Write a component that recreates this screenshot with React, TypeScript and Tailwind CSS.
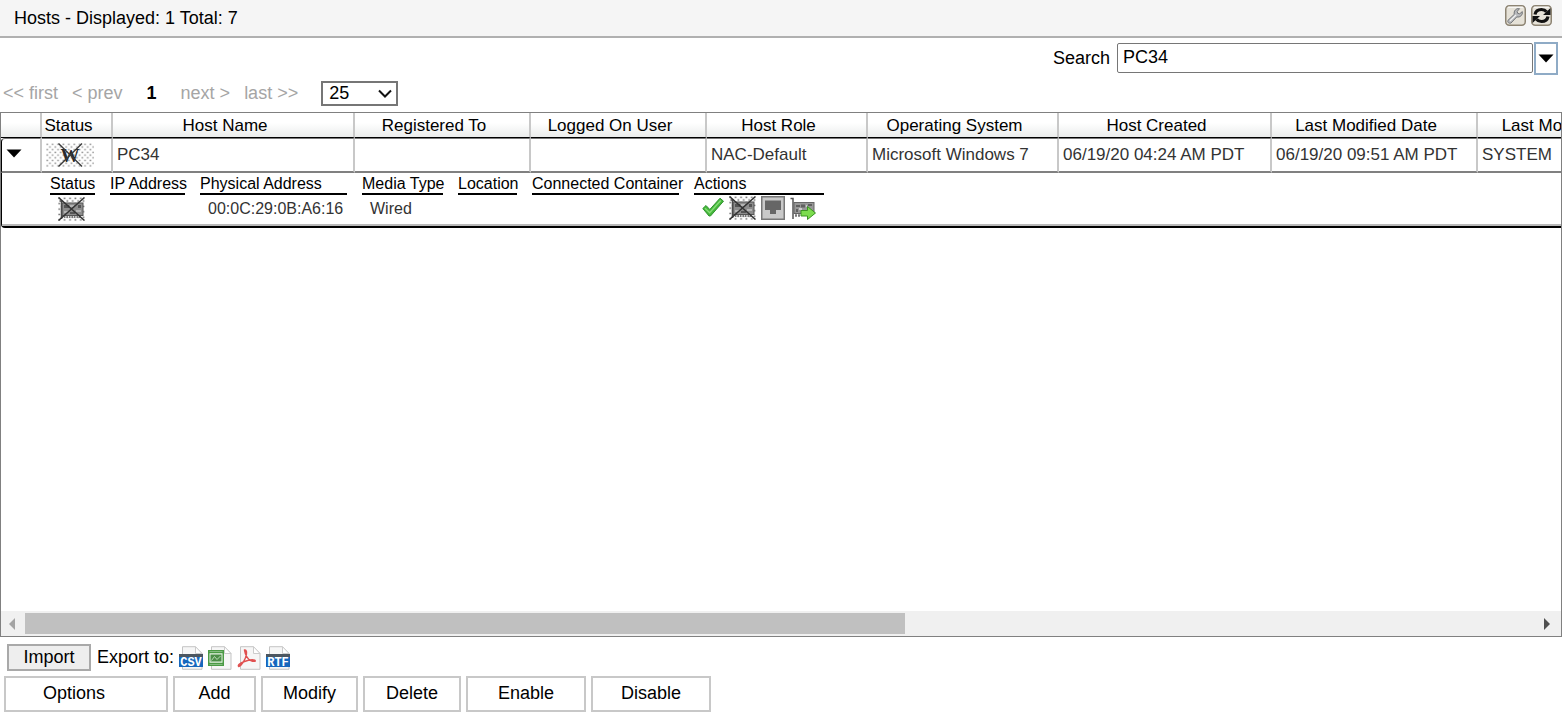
const columns = [
  { label: "", width: "w-[41px]" },
  { label: "Status", width: "w-[71px]" },
  { label: "Host Name", width: "w-[242px]" },
  { label: "Registered To", width: "w-[176px]" },
  { label: "Logged On User", width: "w-[176px]" },
  { label: "Host Role", width: "w-[161px]" },
  { label: "Operating System", width: "w-[191px]" },
  { label: "Host Created", width: "w-[213px]" },
  { label: "Last Modified Date", width: "w-[206px]" },
  { label: "Last Modified By", width: "w-[191px]" },
];

const host = [
  "PC34",
  "",
  "",
  "NAC-Default",
  "Microsoft Windows 7",
  "06/19/20 04:24 AM PDT",
  "06/19/20 09:51 AM PDT",
  "SYSTEM",
];

const adapterColumns = [
  { label: "Status", width: "w-[45px]" },
  { label: "IP Address", width: "w-[75px]" },
  { label: "Physical Address", width: "w-[147px]" },
  { label: "Media Type", width: "w-[81px]" },
  { label: "Location", width: "w-[59px]" },
  { label: "Connected Container", width: "w-[147px]" },
  { label: "Actions", width: "w-[130px]" },
];

const hostActions = [
  { label: "Options", style: "w-[164px] pr-6" },
  { label: "Add", style: "w-[83px]" },
  { label: "Modify", style: "w-[97px]" },
  { label: "Delete", style: "w-[98px]" },
  { label: "Enable", style: "w-[120px]" },
  { label: "Disable", style: "w-[120px]" },
];

const DotPattern = ({ id, color }: { id: string; color: string }) => (
  <defs>
    <pattern id={id} width="5.4" height="5.4" patternUnits="userSpaceOnUse">
      <rect x="0.4" y="0.6" width="1.7" height="1.4" fill={color} />
      <rect x="3.1" y="3.3" width="1.7" height="1.4" fill={color} />
    </pattern>
  </defs>
);

const HostStatusIcon = () => (
  <svg width="48" height="24" viewBox="0 0 48 24" className="block">
    <DotPattern id="host-dots" color="#959595" />
    <rect width="48" height="24" fill="url(#host-dots)" />
    <text
      x="24"
      y="18.5"
      textAnchor="middle"
      fill="#2a2a2a"
      fontSize="19"
      fontWeight="bold"
      fontFamily="Liberation Serif, serif"
    >
      W
    </text>
    <path d="M12.5 0.5 36 23.5M36 0.5 12.5 23.5" stroke="#3a3a3a" strokeWidth="1.4" />
  </svg>
);

const AdapterIcon = ({ id }: { id: string }) => (
  <svg width="27" height="24" viewBox="0 0 27 24" className="block">
    <DotPattern id={id} color="#666" />
    <rect width="27" height="24" fill={`url(#${id})`} />
    <rect x="4" y="6" width="21" height="12.500" fill="#8c8c8c" stroke="#555" />
    <path d="M3.500 4v18M1.500 4h2" stroke="#4a4a4a" strokeWidth="1.500" />
    <path d="M6 8h5v3H6zM12 15h5v2h-5zM20 8h3v3h-3z" fill="#555" />
    <path d="M6 14h4v2H6zM12 8h4v2h-4zM18 13h5v2h-5z" fill="#b5b5b5" />
    <path d="M6 20h17" stroke="#777" strokeWidth="2" strokeDasharray="1.500 1" />
    <path d="M0.500 0.500 26.500 23.500M26.500 0.500 0.500 23.500" stroke="#333" strokeWidth="1.500" />
  </svg>
);

const CheckIcon = () => (
  <svg width="22" height="24" viewBox="0 0 22 24" className="block">
    <path
      d="M0.800 12.500 4 9.500l3.800 4L18 2.200l3.500 3L8.500 20H7z"
      fill="#45b83a"
      stroke="#2f9230"
      strokeLinejoin="round"
    />
    <path d="M3 12.200 7.700 16.800 18.700 4.500" fill="none" stroke="#86dd78" strokeWidth="1.400" />
  </svg>
);

const PortIcon = () => (
  <svg width="24" height="24" viewBox="0 0 24 24" className="block">
    <rect x="0.750" y="0.750" width="22.500" height="22.500" fill="#c9c9c9" stroke="#777" strokeWidth="1.500" />
    <path d="M4 4.500h16V14h-5v4H9v-4H4z" fill="#666" />
  </svg>
);

const AdapterMoveIcon = () => (
  <svg width="26" height="24" viewBox="0 0 26 24" className="block">
    <path d="M0.500 2.500h2.500V23" fill="none" stroke="#555" strokeWidth="1.500" />
    <rect x="4" y="6.500" width="20" height="11" fill="#979797" stroke="#666" />
    <path d="M6 9h4v2H6zM11 8.500h4v3h-4zM18 8h4v2h-4zM6 13h2v3H6z" fill="#606060" />
    <path d="M9 12h3v2H9zM16 9h1v2h-1z" fill="#ccc" />
    <path d="M5 19.500h6" stroke="#777" strokeWidth="2.500" strokeDasharray="2 1" />
    <path
      d="M11 14.500h6.500V10.500l8 6.500-8 6.500V20H11z"
      fill="#7cdc4e"
      stroke="#3b9422"
      strokeLinejoin="round"
    />
  </svg>
);

const IconFrame = ({ children }: { children: React.ReactNode }) => (
  <svg width="21" height="21" viewBox="0 0 21 21" className="block">
    <rect x="0.750" y="0.750" width="19.500" height="19.500" rx="3.500" fill="#e6e2d8" stroke="#8d8473" strokeWidth="1.500" />
    <path d="M3 2.200h15" stroke="#fff" />
    {children}
  </svg>
);

const WrenchIcon = () => (
  <IconFrame>
    <path
      d="M3 15.300 9.300 9.300c-.8-3.300 1.700-6.300 5.200-5.600l-2.300 2.700.5 2 2 .4 2.600-2.200c.6 3.500-2.300 6.100-5.500 5.300L6 18c-2 .9-4-.9-3-2.700z"
      fill="#b9bbbe"
      stroke="#747679"
    />
    <path d="M5 15.800 11 10" stroke="#f2f2f2" strokeWidth="1.200" />
  </IconFrame>
);

const RefreshIcon = () => (
  <IconFrame>
    <path
      d="M4 9.500C4.700 5.800 7.500 4.500 10.500 4.500c2 0 3.800.7 5 2.200M17 11.500c-.7 3.700-3.500 5-6.500 5-2 0-3.800-.7-5-2.200"
      fill="none"
      stroke="#111"
      strokeWidth="3.200"
    />
    <path d="M19.500 3v7h-7.500zM1.500 18v-7H9z" fill="#111" />
  </IconFrame>
);

const Page = () => (
  <>
    <path d="M3.500 0.700h13L23 7.500v15.800H3.500z" fill="#f6f6f6" stroke="#c4c4c4" strokeLinejoin="round" />
    <path d="M16.500 0.700V7.500H23z" fill="#fff" stroke="#ccc" strokeLinejoin="round" />
  </>
);

const LabelFileIcon = ({ label }: { label: string }) => (
  <svg width="24" height="24" viewBox="0 0 24 24" className="block">
    <Page />
    <rect y="8" width="24" height="4" fill="#4c5660" />
    <rect y="11" width="24" height="10" fill="#1767bd" />
    <text
      x="12"
      y="19.800"
      textAnchor="middle"
      fill="#fff"
      fontSize="12"
      fontWeight="bold"
      fontFamily="Liberation Mono, monospace"
    >
      {label}
    </text>
  </svg>
);

const SheetFileIcon = () => (
  <svg width="24" height="24" viewBox="0 0 24 24" className="block">
    <Page />
    <rect x="0.750" y="4.750" width="14.500" height="14.500" fill="#e7f3e4" stroke="#4a9a44" strokeWidth="1.500" />
    <path d="M1 6.500h14M1 17.500h14" stroke="#4a9a44" strokeWidth="1.500" />
    <rect x="2.500" y="8.500" width="11" height="7" fill="#4b8e47" />
    <path d="M3.500 14.500l3-4 2.500 3 3.500-3.500" fill="none" stroke="#b9dab5" />
  </svg>
);

const PdfFileIcon = () => (
  <svg width="24" height="24" viewBox="0 0 24 24" className="block">
    <Page />
    <path
      d="M7.500 4c2-.5 2.200 2 1.800 5-.6 4-4.500 10.500-7.500 11.500-1.500-.8 1-3.500 5-4.800 4-1.500 8.500-2.500 11-1.500 1.500 1.500-1.500 1.500-4 .3C10.500 13 8.200 8.500 7.500 4z"
      fill="none"
      stroke="#e05050"
      strokeWidth="1.500"
      strokeLinejoin="round"
    />
  </svg>
);

const ArrowDown = () => (
  <svg width="16" height="9" viewBox="0 0 16 9" className="block">
    <path d="M0.500 0.500h15L8 8.500z" fill="#000" />
  </svg>
);

const TopBar = () => (
  <header className="flex h-[38px] items-start justify-between border-b-2 border-[#b0b0b0] bg-[#f5f5f5] pr-2.5 pl-3.5">
    <h1 className="leading-9">Hosts - Displayed: 1 Total: 7</h1>
    <div className="flex gap-[5px] pt-[5px]">
      <button aria-label="Settings">
        <WrenchIcon />
      </button>
      <button aria-label="Refresh">
        <RefreshIcon />
      </button>
    </div>
  </header>
);

const SearchRow = () => (
  <div className="flex items-start justify-end pt-1 pr-1">
    <label htmlFor="search" className="pr-[7px] leading-8">
      Search
    </label>
    <input
      id="search"
      defaultValue="PC34"
      className="mt-px h-[30px] w-[416px] rounded-xs border border-[#767676] px-[5px] pb-0.5 outline-none"
    />
    <button
      aria-label="Search options"
      className="ml-px flex h-[33px] w-6 items-center justify-center border-2 border-[#8fabc6] bg-white"
    >
      <ArrowDown />
    </button>
  </div>
);

const Pagination = () => (
  <nav className="flex items-start pt-1.5 pb-1.5 pl-[3px] leading-6 text-[#a5a5a5]">
    <a href="#first">&lt;&lt; first</a>
    <a href="#prev" className="ml-3.5">
      &lt; prev
    </a>
    <span className="mx-6 font-bold text-black">1</span>
    <a href="#next">next &gt;</a>
    <a href="#last" className="ml-3.5">
      last &gt;&gt;
    </a>
    <div className="relative ml-[23px]">
      <select
        aria-label="Rows per page"
        defaultValue="25"
        className="block h-[25px] w-[77px] appearance-none border-2 border-[#767676] bg-white pb-0.5 pl-1.5 leading-5 text-black"
      >
        <option>25</option>
        <option>50</option>
        <option>100</option>
      </select>
      <svg width="14" height="9" viewBox="0 0 14 9" className="pointer-events-none absolute top-2 right-1.5">
        <path d="M1 1.500 7 7.500l6-6" fill="none" stroke="#111" strokeWidth="2" />
      </svg>
    </div>
  </nav>
);

const AdapterTable = () => (
  <table className="ml-[33px] w-[789px] table-fixed border-separate border-spacing-x-[15px] border-spacing-y-0 text-base">
    <thead>
      <tr>
        {adapterColumns.map((col) => (
          <th
            key={col.label}
            className={`${col.width} h-[22px] border-b-2 border-black p-0 pt-0.5 text-left leading-[18px] font-normal whitespace-nowrap`}
          >
            {col.label}
          </th>
        ))}
      </tr>
    </thead>
    <tbody className="text-[#333]">
      <tr className="h-[29px]">
        <td className="p-0 pb-0.5 pl-2">
          <AdapterIcon id="adapter-status" />
        </td>
        <td />
        <td className="px-2 pt-0 pb-0.5 leading-5">00:0C:29:0B:A6:16</td>
        <td className="px-2 pt-0 pb-0.5 leading-5">Wired</td>
        <td />
        <td />
        <td className="p-0 pb-1">
          <div className="flex items-center gap-[5px] pl-2">
            <button aria-label="Enabled">
              <CheckIcon />
            </button>
            <button aria-label="Adapter properties">
              <AdapterIcon id="adapter-action" />
            </button>
            <button aria-label="Port properties">
              <PortIcon />
            </button>
            <button aria-label="Move adapter">
              <AdapterMoveIcon />
            </button>
          </div>
        </td>
      </tr>
    </tbody>
  </table>
);

const HostTable = () => (
  <table className="w-[1668px] table-fixed border-separate border-spacing-0 text-[17px]">
    <thead>
      <tr className="bg-linear-to-b from-white from-40% to-[#e9ebea]">
        {columns.map((col, i) => (
          <th
            key={i}
            className={`${col.width} h-[25px] border-r-2 border-b border-r-[#c8c8c8] border-b-black p-0 pt-0.5 pr-4 leading-[22px] font-normal whitespace-nowrap`}
          >
            {col.label}
          </th>
        ))}
      </tr>
    </thead>
    <tbody>
      <tr className="h-[35px] text-[#333]">
        <td className="rounded-tl-sm border-t border-r-2 border-b-2 border-l border-t-[#777] border-r-[#c8c8c8] border-b-[#808080] border-l-black p-0 pb-1 pl-1">
          <button aria-label="Collapse PC34" className="block">
            <ArrowDown />
          </button>
        </td>
        <td className="border-t border-r-2 border-b-2 border-t-[#777] border-r-[#c8c8c8] border-b-[#808080] p-0 pl-1">
          <HostStatusIcon />
        </td>
        {host.map((value, i) => (
          <td
            key={i}
            className="border-t border-r-2 border-b-2 border-t-[#777] border-r-[#c8c8c8] border-b-[#808080] p-0 pl-1 leading-6 whitespace-nowrap"
          >
            {value}
          </td>
        ))}
      </tr>
      <tr>
        <td colSpan={10} className="rounded-bl-sm border-b-2 border-l border-black p-0">
          <div className="border-b-2 border-[#b9b9b9]">
            <AdapterTable />
          </div>
        </td>
      </tr>
    </tbody>
  </table>
);

const HorizontalScrollbar = () => (
  <div className="flex h-[25px] items-center bg-[#f0f0f0]">
    <button aria-label="Scroll left" className="flex w-6 justify-center pr-0.5">
      <svg width="6" height="12" viewBox="0 0 6 12">
        <path d="M6 0v12L0 6z" fill="#a3a3a3" />
      </svg>
    </button>
    <div className="flex-1">
      <div className="h-[21px] w-7/12 bg-[#c0c0c0]" />
    </div>
    <button aria-label="Scroll right" className="flex w-7 justify-center">
      <svg width="6" height="12" viewBox="0 0 6 12">
        <path d="M0 0v12l6-6z" fill="#505050" />
      </svg>
    </button>
  </div>
);

const Footer = () => (
  <footer className="px-1 pt-[7px] pb-1">
    <div className="flex items-center gap-[5px] pl-[3px]">
      <button className="h-[27px] w-[84px] border-2 border-[#a9a9a9] bg-[#eeeeee] pb-0.5 leading-5">Import</button>
      <span className="pb-0.5 pl-px leading-6">Export to:</span>
      <button aria-label="Export to CSV">
        <LabelFileIcon label="CSV" />
      </button>
      <button aria-label="Export to Excel">
        <SheetFileIcon />
      </button>
      <button aria-label="Export to PDF">
        <PdfFileIcon />
      </button>
      <button aria-label="Export to RTF">
        <LabelFileIcon label="RTF" />
      </button>
    </div>
    <div className="flex gap-[5px] pt-[5px]">
      {hostActions.map((action) => (
        <button
          key={action.label}
          className={`${action.style} h-9 border-2 border-[#c8c8c8] bg-white pb-0.5 leading-5`}
        >
          {action.label}
        </button>
      ))}
    </div>
  </footer>
);

const App = () => {
  return (
    <div className="flex min-h-screen flex-col bg-white font-['Liberation_Sans',Arial,sans-serif] text-lg text-black">
      <TopBar />
      <SearchRow />
      <Pagination />
      <main className="flex flex-1 flex-col border border-[#808080]">
        <div className="flex-1 overflow-hidden">
          <HostTable />
        </div>
        <HorizontalScrollbar />
      </main>
      <Footer />
    </div>
  );
};

export default App;
